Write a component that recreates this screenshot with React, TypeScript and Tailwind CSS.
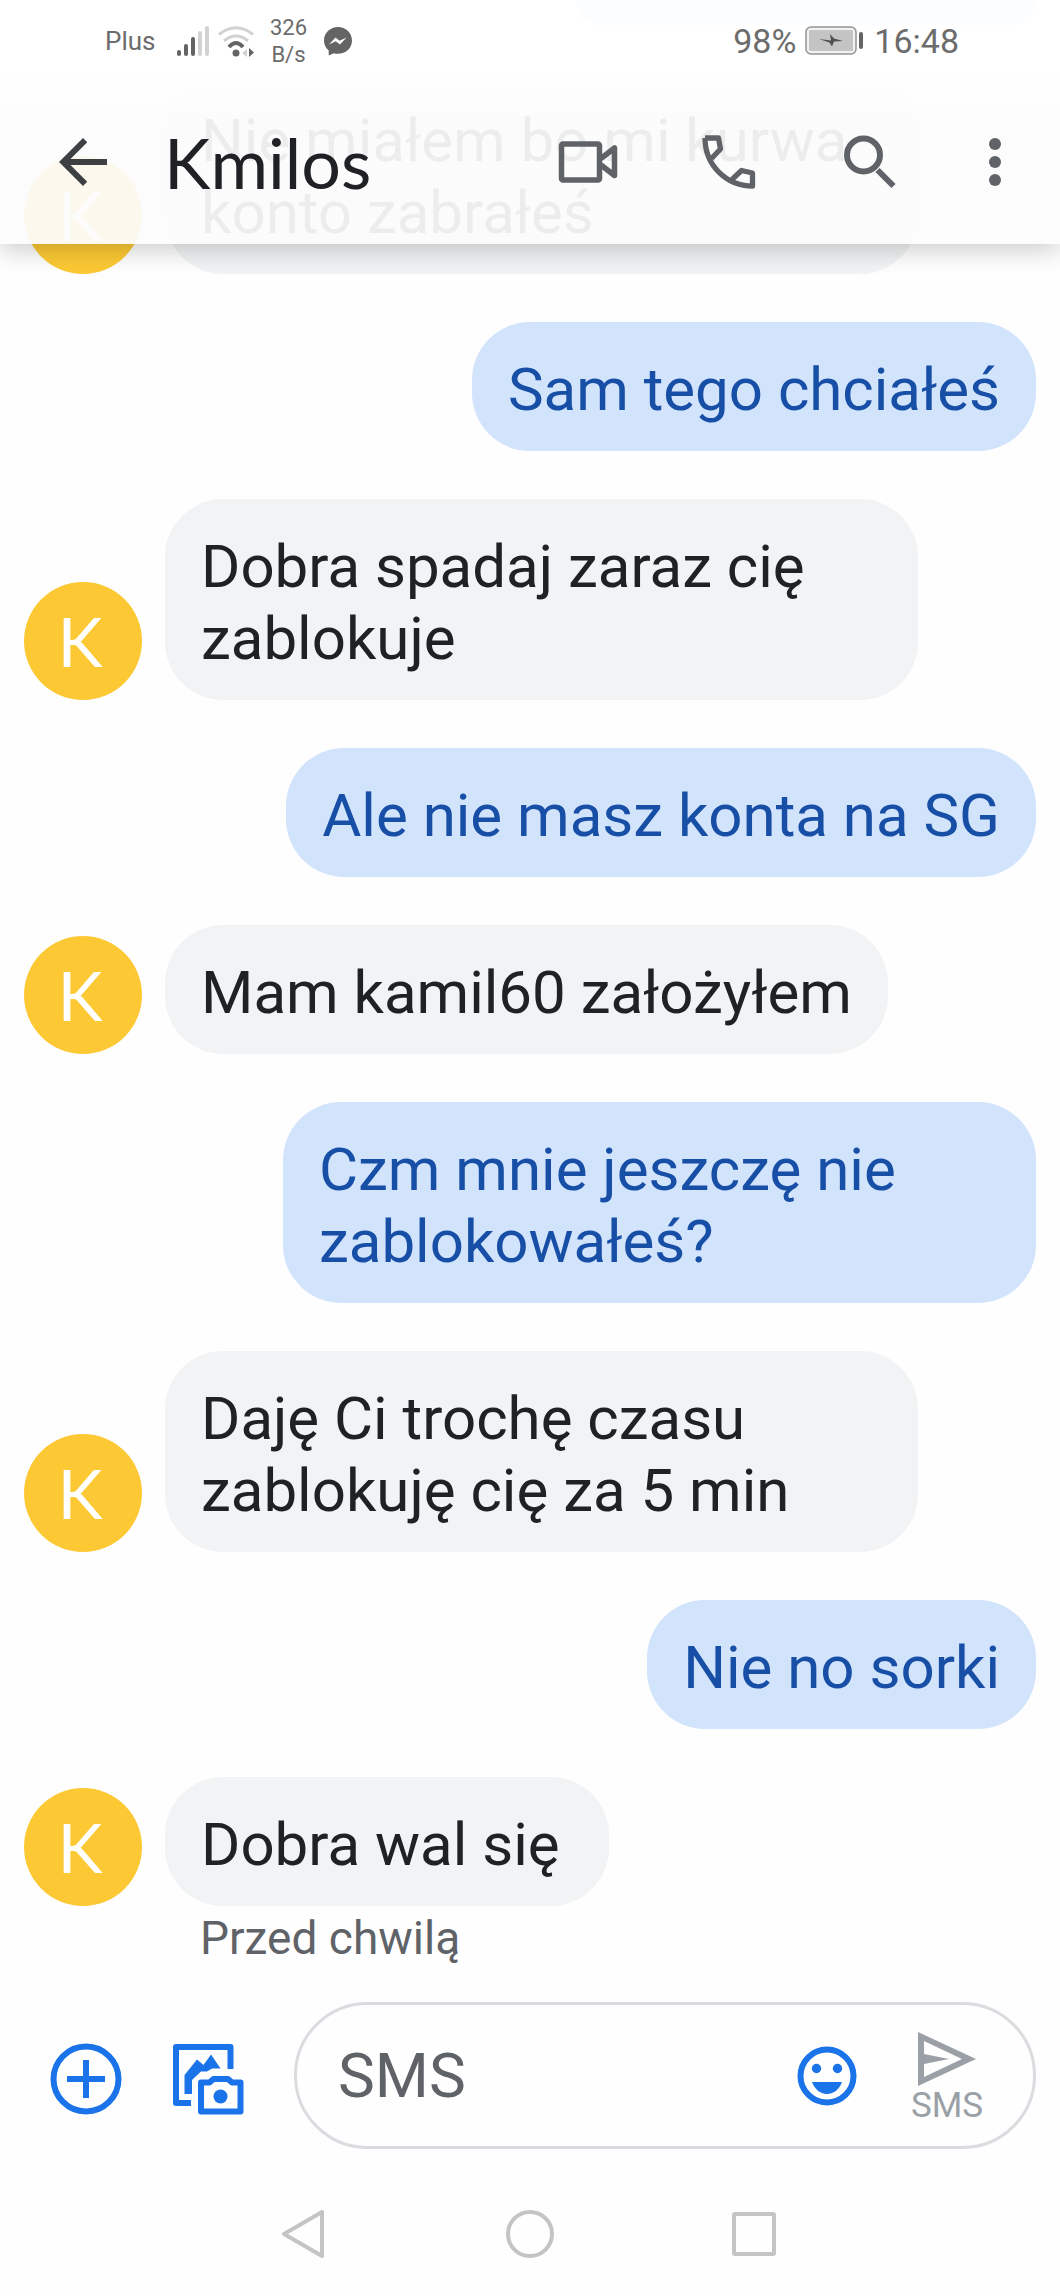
import { MdArrowBack } from 'react-icons/md'

type Message = {
  id: number
  text: string
  mine: boolean
}

const messages: Message[] = [
  { id: 1, text: 'Nie miałem bo mi kurwa konto zabrałeś', mine: false },
  { id: 2, text: 'Sam tego chciałeś', mine: true },
  { id: 3, text: 'Dobra spadaj zaraz cię zablokuje', mine: false },
  { id: 4, text: 'Ale nie masz konta na SG', mine: true },
  { id: 5, text: 'Mam kamil60 założyłem', mine: false },
  { id: 6, text: 'Czm mnie jeszczę nie zablokowałeś?', mine: true },
  { id: 7, text: 'Daję Ci trochę czasu zablokuję cię za 5 min', mine: false },
  { id: 8, text: 'Nie no sorki', mine: true },
  { id: 9, text: 'Dobra wal się', mine: false },
]

const StatusBar = () => (
  <div className="flex h-20 items-center justify-between pt-[2px] pr-[101px] pl-[105px] text-[#6c6c6c]">
    <div className="flex items-center">
      <span className="text-[26px] leading-8">Plus</span>
      <svg className="ml-[22px]" width="32" height="32" viewBox="0 0 32 32" fill="#646464">
        <rect x="0" y="25" width="4" height="6" rx="2" />
        <rect x="7" y="19" width="4" height="12" rx="2" />
        <rect x="14" y="12" width="4" height="19" rx="2" />
        <rect x="21" y="6" width="4" height="25" rx="2" fill="#d2d2d2" />
        <rect x="28" y="1" width="4" height="30" rx="2" fill="#d2d2d2" />
      </svg>
      <svg className="ml-[9px]" width="38" height="32" viewBox="0 0 38 32" fill="none" strokeWidth="3">
        <path d="M1 9.500Q18 -4 35 9.500" stroke="#d2d2d2" />
        <path d="M6 16Q18 6 30 16" stroke="#d2d2d2" />
        <path d="M11 22Q18 14 25 22" stroke="#646464" strokeWidth="4" />
        <circle cx="18" cy="28" r="3.500" fill="#646464" />
        <path d="M29 24v8l-5-4z" fill="#d2d2d2" />
        <path d="M31 23v9l5-4.500z" fill="#646464" />
      </svg>
      <span className="ml-3 w-10 text-center text-[22px] leading-[27px]">
        326
        <br />
        B/s
      </span>
      <svg className="ml-4" width="28" height="30" viewBox="0 0 28 30">
        <path
          d="M14 1C6.500 1 0 6.500 0 14.500c0 4 1.700 7.500 4.700 9.900V29.500l5-2.200c1.400.4 2.800.5 4.300.5 7.700 0 14-5.500 14-13.300S21.500 1 14 1z"
          fill="#646464"
        />
        <path d="M5 18.500l6.500-7 4 3.300 7-3.300-6.500 7-4.300-3.300z" fill="#fff" />
      </svg>
    </div>
    <div className="flex items-center text-[34px] leading-10">
      <span>98%</span>
      <svg className="mx-[9px]" width="60" height="30" viewBox="0 0 60 30">
        <rect x="1" y="1" width="50" height="27" rx="5" fill="#f2f2f2" stroke="#949494" strokeWidth="1.500" />
        <rect x="4" y="4" width="44" height="21" rx="1" fill="#c4c4c4" />
        <path d="M14 13l12 1.500-1-6.500 4 4.500 9 2.500-9 .5-2 5-2.500-4z" fill="#505050" />
        <rect x="54" y="6" width="4" height="17" rx="2" fill="#646464" />
      </svg>
      <span>16:48</span>
    </div>
  </div>
)

const Toolbar = () => (
  <div className="flex h-[164px] items-center pr-[45px] pl-[47px] text-[#5f6368]">
    <button type="button" aria-label="Wstecz" className="text-[#3c4043]">
      <MdArrowBack className="size-[72px]" />
    </button>
    <h1 className="ml-[45px] flex-1 font-['Lato',sans-serif] text-[70px] leading-20 text-[#202124]">
      Kmilos
    </h1>
    <div className="flex items-center gap-[69px]">
      <button type="button" aria-label="Połączenie wideo" className="flex w-[72px] justify-center">
        <svg width="60" height="42" viewBox="0 0 60 42" fill="none" stroke="currentColor" strokeWidth="5.500" strokeLinejoin="round">
          <rect x="3.500" y="3" width="38" height="36" rx="1.500" />
          <path d="M43 17.500L56.500 7v27.500L43 24" />
        </svg>
      </button>
      <button type="button" aria-label="Zadzwoń" className="flex w-[72px] justify-center">
        <svg width="54" height="54" viewBox="0 0 54 54" fill="none" stroke="currentColor" strokeWidth="5.300" strokeLinejoin="round">
          <path d="M3 3H16.500L18.500 14L9.500 23.500" />
          <path d="M3 3C3 30 24 51 50.500 51V38L39.500 35.500L30 44.500" />
        </svg>
      </button>
      <button type="button" aria-label="Szukaj" className="flex w-[72px] justify-center">
        <svg width="52" height="54" viewBox="0 0 52 54" fill="none" stroke="currentColor" strokeWidth="6">
          <circle cx="19.500" cy="20" r="16.500" />
          <path d="M33.500 35L49.500 51" />
        </svg>
      </button>
      <button type="button" aria-label="Więcej opcji" className="flex w-10 justify-center">
        <svg width="12" height="48" viewBox="0 0 12 48" fill="currentColor">
          <circle cx="6" cy="6" r="6" />
          <circle cx="6" cy="24" r="6" />
          <circle cx="6" cy="42" r="6" />
        </svg>
      </button>
    </div>
  </div>
)

const MessageRow = ({ message }: { message: Message }) => {
  if (message.mine) {
    return (
      <li className="flex justify-end">
        <p className="max-w-[753px] rounded-[58px] bg-[#d2e3fc] px-9 pt-8 pb-[25px] text-[#174ea6]">
          {message.text}
        </p>
      </li>
    )
  }

  return (
    <li className="flex items-end gap-[23px]">
      <span className="flex size-[118px] shrink-0 items-center justify-center rounded-full bg-[#fcc934] pr-[6px] font-['Lato',sans-serif] text-[68px] text-white">
        K
      </span>
      <p className="max-w-[753px] min-w-[444px] rounded-[58px] bg-[#f1f3f4] px-9 pt-8 pb-[25px] text-[#202124]">
        {message.text}
      </p>
    </li>
  )
}

const Composer = () => (
  <form className="mt-[38px] flex items-center gap-[50px] pr-6 pl-[50px]" onSubmit={(e) => e.preventDefault()}>
    <div className="flex gap-[50px] pt-[6px] text-[#1a73e8]">
      <button type="button" aria-label="Dodaj">
        <svg width="72" height="72" viewBox="0 0 72 72" fill="none" stroke="currentColor" strokeWidth="6">
          <circle cx="36" cy="36" r="32.500" />
          <path d="M36 17v38M17 36h38" />
        </svg>
      </button>
      <button type="button" aria-label="Galeria i aparat">
        <svg width="72" height="72" viewBox="0 0 72 72" fill="none" stroke="currentColor" strokeWidth="6" strokeLinejoin="round">
          <path d="M19 60H4V4H58.500V26" />
          <path d="M12.500 51V32L25 16.500L31.500 22L39 11.500L48.500 25.500H40L35 28.500H29L20 37V51z" fill="currentColor" stroke="none" />
          <path d="M29 39.500H37.500L41.500 36H56L60 39.500H68.500V68.500H29z" />
          <circle cx="48.500" cy="53.500" r="7" fill="currentColor" stroke="none" />
        </svg>
      </button>
    </div>
    <div className="flex h-[147px] min-w-0 flex-1 items-center rounded-full border-[3px] border-[#dadce0] pr-[50px] pl-[41px]">
      <input
        type="text"
        aria-label="Wiadomość SMS"
        placeholder="SMS"
        className="min-w-0 flex-1 bg-transparent text-[62px] leading-[72px] outline-none placeholder:text-[#5f6368]"
      />
      <button type="button" aria-label="Emoji" className="text-[#1a73e8]">
        <svg width="60" height="60" viewBox="0 0 60 60">
          <circle cx="30" cy="30" r="26.500" fill="none" stroke="currentColor" strokeWidth="6" />
          <circle cx="19.500" cy="22.500" r="4.700" fill="currentColor" />
          <circle cx="40.500" cy="22.500" r="4.700" fill="currentColor" />
          <path d="M15 36H45C42.500 43 37 48 30 48S17.500 43 15 36z" fill="currentColor" />
        </svg>
      </button>
      <button type="submit" className="ml-[54px] flex flex-col items-center pt-[6px] text-[35px] leading-10 text-[#9aa0a6]">
        <svg width="58" height="54" viewBox="0 0 58 54">
          <path fillRule="evenodd" d="M0 0L58 27L0 54zM6 9V22L31 27L6 32V45L44 27z" fill="currentColor" />
        </svg>
        SMS
      </button>
    </div>
  </form>
)

const NavigationBar = () => (
  <nav className="flex justify-center gap-[178px] pt-[61px] pb-[38px]">
    <button type="button" aria-label="Cofnij">
      <svg width="48" height="48" viewBox="0 0 48 48" fill="none" stroke="#c4c4c4" strokeWidth="4" strokeLinejoin="round">
        <path d="M42 2V46L4 24z" />
      </svg>
    </button>
    <button type="button" aria-label="Ekran główny">
      <svg width="48" height="48" viewBox="0 0 48 48" fill="none" stroke="#c4c4c4" strokeWidth="4">
        <circle cx="24" cy="24" r="22" />
      </svg>
    </button>
    <button type="button" aria-label="Ostatnie aplikacje">
      <svg width="48" height="48" viewBox="0 0 48 48" fill="none" stroke="#c4c4c4" strokeWidth="4" strokeLinejoin="round">
        <rect x="2" y="4" width="40" height="40" rx="1" />
      </svg>
    </button>
  </nav>
)

const App = () => (
  <div className="relative min-h-screen bg-[#fefefe] font-['Roboto',sans-serif]">
    <header className="absolute inset-x-0 top-0 z-10 bg-linear-to-b from-white/93 from-30% to-[#fcfcfc]/93 to-50% shadow-[0_6px_24px_rgba(0,0,0,0.2)]">
      <StatusBar />
      <Toolbar />
    </header>

    <main>
      <div className="flex justify-end px-6">
        <div className="h-[25px] w-[460px] rounded-b-[58px] bg-[#d2e3fc]" />
      </div>
      <ul className="flex flex-col gap-12 px-6 pt-12 text-[60px] leading-[72px]">
        {messages.map((message) => (
          <MessageRow key={message.id} message={message} />
        ))}
      </ul>
      <p className="mt-[6px] pl-[200px] text-[46px] leading-[52px] text-[#5f6368]">Przed chwilą</p>
    </main>

    <Composer />
    <NavigationBar />
  </div>
)

export default App
